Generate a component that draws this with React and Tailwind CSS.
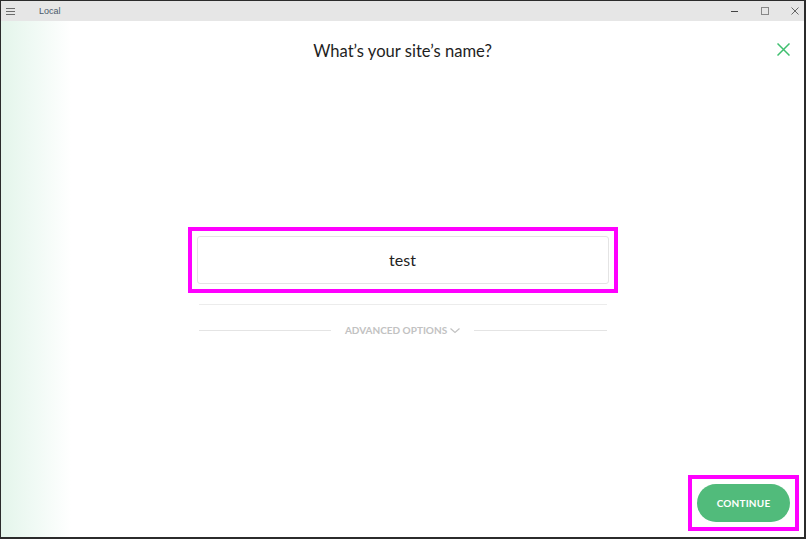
export default function App() {
  return (
    <div className="w-[806px] h-[539px] flex flex-col bg-white border-t border-l border-r-2 border-b-2 border-[#2b2b2b] font-['Lato',sans-serif] overflow-hidden">
      {/* title bar */}
      <div className="h-[20px] shrink-0 bg-[#e6e6e6] flex items-center">
        <svg width="9" height="7" viewBox="0 0 9 7" className="ml-[5px]">
          <rect x="0" y="0" width="9" height="1" fill="#6b6b6b" />
          <rect x="0" y="3" width="9" height="1" fill="#6b6b6b" />
          <rect x="0" y="6" width="9" height="1" fill="#6b6b6b" />
        </svg>
        <span className="ml-[24px] text-[9px] leading-[10px] text-[#4a5a6a] font-['Liberation_Sans',sans-serif]">Local</span>
        <div className="flex-1" />
        <div className="flex items-center gap-[22px] mr-[5px]">
          <svg width="8" height="8" viewBox="0 0 8 8">
            <rect x="0" y="4" width="7" height="1" fill="#444" />
          </svg>
          <svg width="8" height="8" viewBox="0 0 8 8">
            <rect x="0.5" y="0.5" width="7" height="7" fill="none" stroke="#888" strokeWidth="1" />
          </svg>
          <svg width="8" height="8" viewBox="0 0 8 8">
            <path d="M0.5 0.5 L7.5 7.5 M7.5 0.5 L0.5 7.5" stroke="#666" strokeWidth="1" />
          </svg>
        </div>
      </div>

      {/* content */}
      <div className="flex-1 relative flex flex-col items-center bg-[linear-gradient(to_right,#e4f5eb_0px,#f1faf5_35px,#ffffff_70px)]">
        <svg width="13" height="13" viewBox="0 0 13 13" className="absolute right-[14px] top-[22px]">
          <path d="M0.5 0.5 L12.5 12.5 M12.5 0.5 L0.5 12.5" stroke="#3fbf6f" strokeWidth="1.5" />
        </svg>

        <h1 className="mt-[20px] text-[16.6px] leading-[20px] text-[#1e1e1e] font-normal">What’s your site’s name?</h1>

        <div className="mt-[166px] w-[430px] h-[66px] border-4 border-[#ff00ff] p-[5px]">
          <div className="w-full h-full rounded-[3px] border border-[#e4e4e4] bg-white flex items-center justify-center text-[16px] text-[#222]">
            test
          </div>
        </div>

        <div className="mt-[11px] w-[408px] h-px bg-[#ececec]" />

        <div className="mt-[18px] w-[408px] flex items-center">
          <div className="flex-1 h-px bg-[#e4e4e4]" />
          <div className="mx-[14px] flex items-center gap-[3px] text-[10px] font-bold text-[#c2c2c2]">
            <span>ADVANCED OPTIONS</span>
            <svg width="10" height="6" viewBox="0 0 10 6">
              <path d="M0.5 0.5 L5 4.5 L9.5 0.5" fill="none" stroke="#c2c2c2" strokeWidth="1.2" />
            </svg>
          </div>
          <div className="flex-1 h-px bg-[#e4e4e4]" />
        </div>

        <div className="flex-1" />

        <div className="self-end mr-[5px] mb-[6px] w-[111px] h-[56px] border-4 border-[#ff00ff] flex items-center justify-center">
          <div className="w-[93px] h-[38px] rounded-full bg-[#51bb7b] flex items-center justify-center text-white text-[10px] font-bold tracking-[0.2px]">
            CONTINUE
          </div>
        </div>
      </div>
    </div>
  );
}
